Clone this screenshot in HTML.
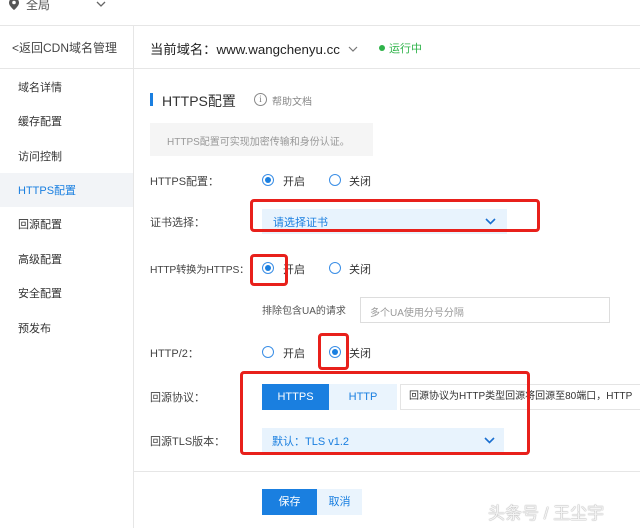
<!DOCTYPE html>
<html><head><meta charset="utf-8"><style>
*{margin:0;padding:0;box-sizing:border-box}
body{width:640px;height:528px;overflow:hidden;background:#fff;font-family:"Liberation Sans","Noto Sans CJK SC",sans-serif;color:#333;font-size:12px;position:relative}
.a{position:absolute;white-space:nowrap}
.sb{left:18px;font-size:11px;color:#333}
.lbl{left:150px;font-size:11px;color:#444}
.r{position:absolute;width:12px;height:12px;border:1px solid #3a8ee6;border-radius:50%;background:#fff}
.r.on::after{content:"";position:absolute;left:2px;top:2px;width:6px;height:6px;border-radius:50%;background:#1a7fe0}
.red{position:absolute;border:3px solid #e8201b;border-radius:4px}
</style></head><body>
<div class="a" style="left:0;top:25px;width:640px;height:1px;background:#e6e6e6"></div>
<svg class="a" style="left:9px;top:-2px" width="10" height="12"><path d="M5 0C2 0 0 2 0 5c0 3 5 7 5 7s5-4 5-7C10 2 8 0 5 0z" fill="#555"/><circle cx="5" cy="4.5" r="1.8" fill="#fff"/></svg>
<div class="a" style="left:26px;top:-4px;font-size:12px;color:#555">全局</div>
<svg class="a" style="left:96px;top:1px" width="10" height="6"><path d="M1 1l4 4 4-4" stroke="#666" fill="none" stroke-width="1.3"/></svg>
<div class="a" style="left:133px;top:26px;width:1px;height:502px;background:#e6e6e6"></div>
<div class="a" style="left:0;top:68px;width:640px;height:1px;background:#e6e6e6"></div>
<div class="a" style="left:12px;top:39px;font-size:12px;color:#444">&lt;返回CDN域名管理</div>
<div class="a" style="left:150px;top:39px;font-size:13.3px;color:#222">当前域名：www.wangchenyu.cc</div>
<svg class="a" style="left:348px;top:46px" width="10" height="6"><path d="M1 1l4 4 4-4" stroke="#777" fill="none" stroke-width="1.2"/></svg>
<div class="a" style="left:379px;top:45px;width:6px;height:6px;border-radius:50%;background:#2fb34a"></div>
<div class="a" style="left:389px;top:40px;font-size:11px;color:#2fb34a">运行中</div>
<div class="a" style="left:0;top:173px;width:133px;height:34px;background:#f2f4f7"></div>
<div class="a sb" style="top:79px">域名详情</div>
<div class="a sb" style="top:113px">缓存配置</div>
<div class="a sb" style="top:148px">访问控制</div>
<div class="a sb" style="top:182px;color:#1a7fe0">HTTPS配置</div>
<div class="a sb" style="top:216px">回源配置</div>
<div class="a sb" style="top:251px">高级配置</div>
<div class="a sb" style="top:285px">安全配置</div>
<div class="a sb" style="top:320px">预发布</div>
<div class="a" style="left:150px;top:93px;width:3px;height:13px;background:#1a7fe0"></div>
<div class="a" style="left:162px;top:91px;font-size:14px;color:#333">HTTPS配置</div>
<div class="a" style="left:254px;top:93px;width:13px;height:13px;border:1px solid #888;border-radius:50%;font-size:9px;line-height:11px;text-align:center;color:#777;font-family:'Liberation Serif',serif">i</div>
<div class="a" style="left:272px;top:93px;font-size:10px;color:#888">帮助文档</div>
<div class="a" style="left:150px;top:123px;width:223px;height:33px;background:#f5f5f5"></div>
<div class="a" style="left:167px;top:133px;font-size:10px;color:#999">HTTPS配置可实现加密传输和身份认证。</div>
<div class="a lbl" style="top:173px">HTTPS配置：</div>
<div class="r on" style="left:262px;top:174px"></div><div class="a" style="left:283px;top:173px;font-size:11px">开启</div>
<div class="r" style="left:329px;top:174px"></div><div class="a" style="left:349px;top:173px;font-size:11px">关闭</div>
<div class="a lbl" style="top:214px">证书选择：</div>
<div class="a" style="left:262px;top:209px;width:245px;height:25px;background:#e8f3fd"></div>
<div class="a" style="left:273px;top:214px;font-size:11px;color:#1a7fe0">请选择证书</div>
<svg class="a" style="left:485px;top:218px" width="11" height="7"><path d="M1 1l4.5 4.5L10 1" stroke="#1a6fd0" fill="none" stroke-width="1.6"/></svg>
<div class="red" style="left:250px;top:199px;width:290px;height:33px"></div>
<div class="a lbl" style="top:261px;font-size:10.3px;letter-spacing:-0.2px">HTTP转换为HTTPS：</div>
<div class="r on" style="left:262px;top:262px"></div><div class="a" style="left:283px;top:261px;font-size:11px">开启</div>
<div class="r" style="left:329px;top:262px"></div><div class="a" style="left:349px;top:261px;font-size:11px">关闭</div>
<div class="red" style="left:250px;top:254px;width:38px;height:32px"></div>
<div class="a" style="left:262px;top:302px;font-size:10px;color:#555">排除包含UA的请求</div>
<div class="a" style="left:360px;top:297px;width:250px;height:26px;border:1px solid #ddd"></div>
<div class="a" style="left:370px;top:304px;font-size:10px;color:#999">多个UA使用分号分隔</div>
<div class="a lbl" style="top:345px">HTTP/2：</div>
<div class="r" style="left:262px;top:346px"></div><div class="a" style="left:283px;top:345px;font-size:11px">开启</div>
<div class="r on" style="left:329px;top:346px"></div><div class="a" style="left:349px;top:345px;font-size:11px">关闭</div>
<div class="red" style="left:318px;top:333px;width:31px;height:37px"></div>
<div class="a lbl" style="top:389px">回源协议：</div>
<div class="a" style="left:262px;top:384px;width:67px;height:26px;background:#1a7fe0;color:#fff;font-size:11px;line-height:26px;text-align:center">HTTPS</div>
<div class="a" style="left:329px;top:384px;width:68px;height:26px;background:#eaf4fd;color:#1a7fe0;font-size:11px;line-height:26px;text-align:center">HTTP</div>
<div class="a" style="left:400px;top:384px;width:240px;height:26px;border:1px solid #e4e4e4;border-right:none;font-size:10px;line-height:24px;padding-left:8px;color:#333">回源协议为HTTP类型回源将回源至80端口，HTTP</div>
<div class="a lbl" style="top:433px">回源TLS版本：</div>
<div class="a" style="left:262px;top:428px;width:242px;height:25px;background:#e8f3fd"></div>
<div class="a" style="left:272px;top:433px;font-size:11px;color:#1a7fe0">默认：TLS v1.2</div>
<svg class="a" style="left:484px;top:437px" width="11" height="7"><path d="M1 1l4.5 4.5L10 1" stroke="#1a6fd0" fill="none" stroke-width="1.6"/></svg>
<div class="red" style="left:240px;top:371px;width:290px;height:84px"></div>
<div class="a" style="left:134px;top:471px;width:506px;height:1px;background:#e6e6e6"></div>
<div class="a" style="left:262px;top:489px;width:55px;height:26px;background:#1a7fe0;color:#fff;font-size:11px;line-height:26px;text-align:center">保存</div>
<div class="a" style="left:317px;top:489px;width:45px;height:26px;background:#eaf4fd;color:#1a7fe0;font-size:11px;line-height:26px;text-align:center">取消</div>
<div class="a" style="left:488px;top:499px;font-size:17px;color:#f4f4f4;text-shadow:0 0 1px #999,0 0 1px #aaa">头条号 / 王尘宇</div>
</body></html>
